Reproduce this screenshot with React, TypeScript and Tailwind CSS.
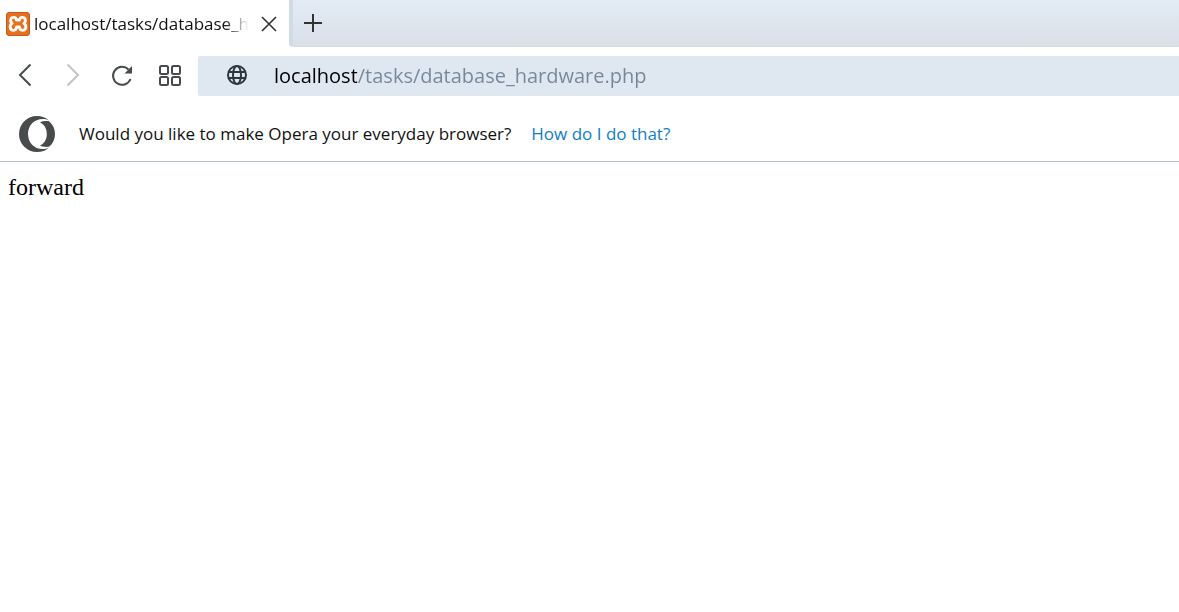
import { useState } from "react";

function XamppIcon() {
  return (
    <svg viewBox="0 0 24 24" className="size-6 shrink-0" aria-hidden="true">
      <rect x="0.5" y="0.5" width="23" height="23" rx="2.5" fill="#e8701c" stroke="#bd5b20" />
      <path
        d="M7.800 5.300C10 5.300 10.300 6.500 10.500 8h3c.2-1.500.5-2.700 2.700-2.700 3.400 0 4.300 4 1.600 6 3.400 2.200 2.300 7-1.300 7-2.300 0-2.900-1.400-3-3.300h-3c-.1 1.900-.7 3.300-3 3.300-3.600 0-4.700-4.800-1.300-7-2.700-2-1.800-6 1.600-6z"
        fill="none"
        stroke="#fff"
        strokeWidth="2.8"
        strokeLinejoin="round"
      />
    </svg>
  );
}

function OperaIcon() {
  return (
    <svg viewBox="0 0 36 36" className="size-9 shrink-0" aria-hidden="true">
      <path
        d="M18 0a18 18 0 1 0 0 36c4.700 0 9-1.500 12-4.500-2 1.200-4.200 1.600-6.200 1.600C15 33.100 9 26.500 9 18S15 2.900 23.800 2.900c2 0 4.200.4 6.200 1.600C27 1.500 22.700 0 18 0z"
        fill="#474b4b"
      />
      <path
        d="M21 6.500C23 5.200 27 4.800 30 5.200c4 3.200 6 7.800 6 12.800s-2 9.600-6 12.800c-3 .4-7 0-9-1.300 4.200-1.700 6.800-6 6.800-11.500S25.200 8.200 21 6.500z"
        fill="#474b4b"
      />
    </svg>
  );
}

export default function App() {
  const [address, setAddress] = useState("localhost/tasks/database_hardware.php");

  return (
    <div className="min-h-screen bg-white font-['Open_Sans',sans-serif] text-[#111]">
      <header>
        <div className="flex h-[47px]" role="tablist">
          <div className="flex w-[289px] shrink-0 items-center pl-1.5 pr-2.5">
            <button role="tab" aria-selected="true" className="flex min-w-0 flex-1 items-center gap-1">
              <XamppIcon />
              <span className="w-[215px] overflow-hidden whitespace-nowrap text-left text-[17px] leading-6 [mask-image:linear-gradient(to_right,black_190px,transparent_215px)]">
                localhost/tasks/database_hardware.php
              </span>
            </button>
            <button aria-label="Close tab" className="ml-2 shrink-0">
              <svg viewBox="0 0 20 20" className="size-5" fill="none" stroke="#333" strokeWidth="1.6">
                <path d="M3 3l14 14M17 3L3 17" />
              </svg>
            </button>
          </div>
          <div className="flex flex-1 items-center rounded-bl-sm border-b border-l-4 border-b-[#d6dde4] border-l-[#cfdbe9] bg-linear-to-b from-[#e3ebf4] to-[#d9e0e8] pl-2.5">
            <button aria-label="New tab">
              <svg viewBox="0 0 20 20" className="size-5" fill="none" stroke="#333" strokeWidth="2">
                <path d="M10 1v18M1 10h18" />
              </svg>
            </button>
          </div>
        </div>

        <nav className="flex h-[58px] items-center text-[#474b4b]">
          <div className="flex w-[198px] shrink-0 items-center gap-6 pl-3.5">
            <button aria-label="Back">
              <svg viewBox="0 0 24 24" className="size-6" fill="none" stroke="currentColor" strokeWidth="2">
                <path d="M16.500 0.500L6 11l10.500 10.500" />
              </svg>
            </button>
            <button aria-label="Forward" disabled className="text-[#c4c4c4]">
              <svg viewBox="0 0 24 24" className="size-6" fill="none" stroke="currentColor" strokeWidth="2">
                <path d="M5.500 0.500L16 11 5.500 21.500" />
              </svg>
            </button>
            <button aria-label="Reload">
              <svg viewBox="0 0 24 24" className="size-6" fill="none" stroke="currentColor" strokeWidth="2">
                <path d="M18.500 5.500A9 9 0 1 0 20.500 15" />
                <path d="M22 2v7.500h-7.500z" fill="currentColor" stroke="none" />
              </svg>
            </button>
            <button aria-label="Speed dial">
              <svg viewBox="0 0 24 24" className="size-6" fill="none" stroke="currentColor" strokeWidth="2">
                <rect x="2" y="2" width="8" height="8" rx="1.500" />
                <rect x="14" y="2" width="8" height="8" rx="1.500" />
                <rect x="2" y="13" width="8" height="8" rx="1.500" />
                <rect x="14" y="13" width="8" height="8" rx="1.500" />
              </svg>
            </button>
          </div>
          <div className="flex h-10 flex-1 items-center gap-[26px] rounded-l-xs bg-[#dfe7f1] pl-7">
            <svg viewBox="0 0 22 22" className="size-[22px] shrink-0" fill="none" stroke="#2c3640" strokeWidth="2" aria-hidden="true">
              <circle cx="11" cy="10" r="9" />
              <ellipse cx="11" cy="10" rx="4" ry="9" />
              <path d="M3 7h16M3 13h16" />
            </svg>
            <input
              aria-label="Address"
              value={address}
              onChange={(event) => setAddress(event.target.value)}
              spellCheck={false}
              className="h-10 min-w-0 flex-1 bg-linear-to-r from-black from-[83px] to-[#75879a] to-[83px] bg-clip-text pb-0.5 text-[20px] text-[#75879a] outline-none [-webkit-text-fill-color:transparent]"
            />
          </div>
        </nav>

        <div className="flex h-[57px] items-center border-b border-[#b4bfca] pt-0.5 pl-[19px] text-[17px]">
          <OperaIcon />
          <p className="ml-6">Would you like to make Opera your everyday browser?</p>
          <a href="#default-browser" className="ml-5 text-[#0f7dc7]">
            How do I do that?
          </a>
        </div>
      </header>

      <main className="px-2 pt-[11px] font-['Liberation_Serif',serif] text-[24px] leading-7 text-black">forward</main>
    </div>
  );
}
